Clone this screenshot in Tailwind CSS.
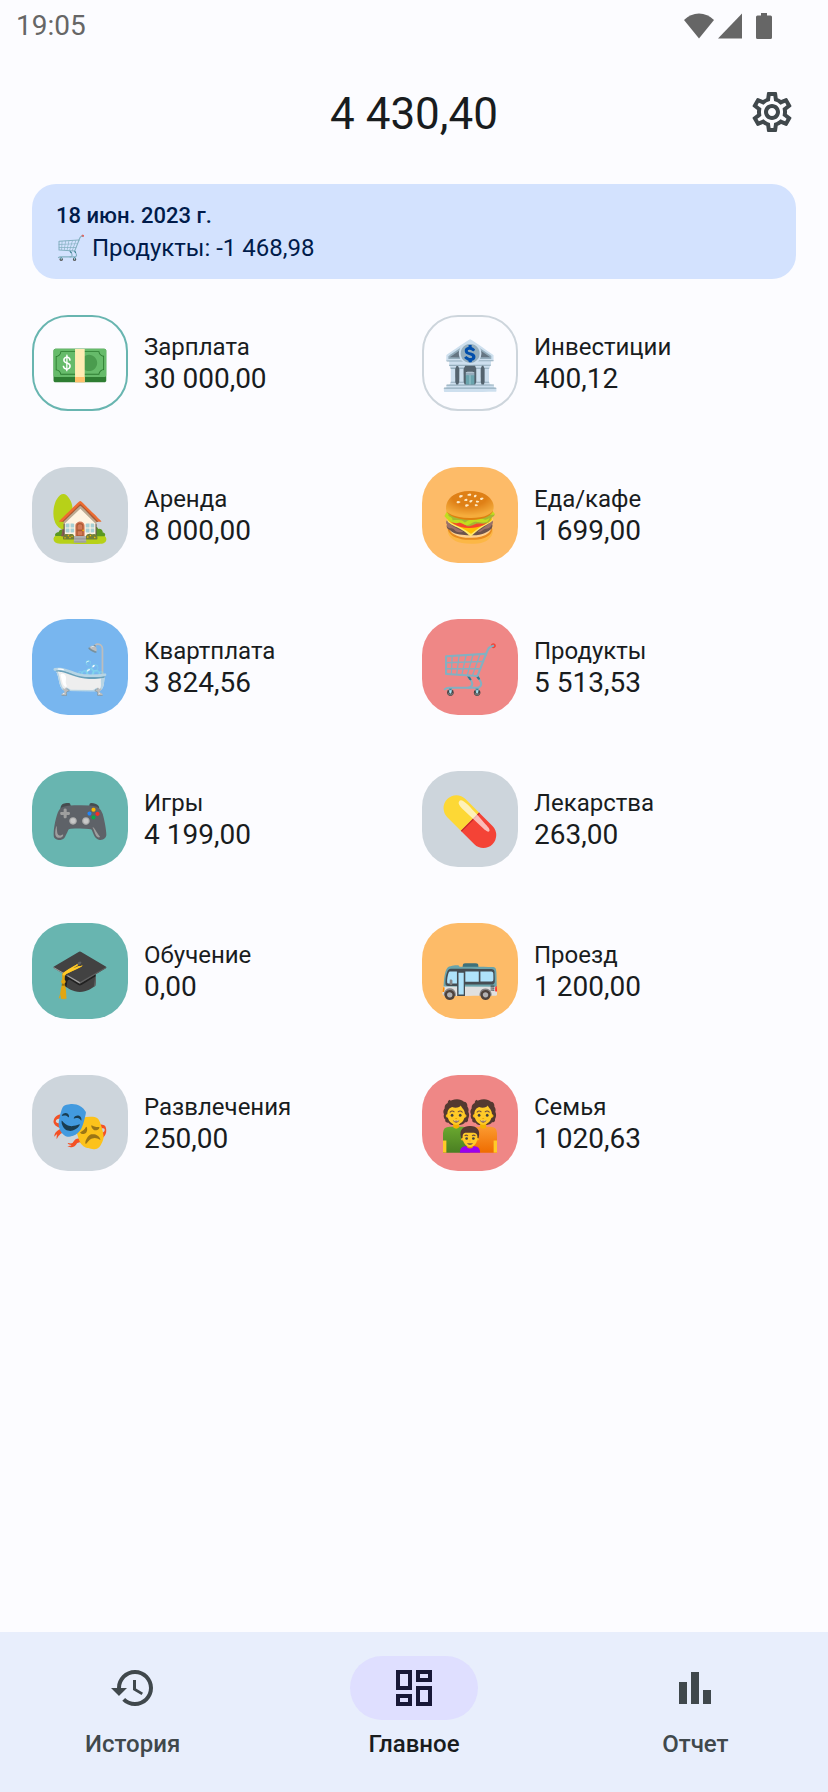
<!DOCTYPE html>
<html lang="ru">
<head>
<meta charset="utf-8">
<meta name="viewport" content="width=device-width, initial-scale=1">
<title>Бюджет</title>
<script src="https://cdn.jsdelivr.net/npm/@tailwindcss/browser@4"></script>
</head>
<body class="flex min-h-screen flex-col bg-[#fcfcff] font-[Roboto,sans-serif] text-[#191c1e]">

  <div class="flex h-12 items-center justify-between pt-1 pl-4 pr-14 text-[#666666]">
    <time class="text-[28px] leading-8">19:05</time>
    <div class="flex items-center">
      <svg class="h-[26px] w-[30px]" viewBox="0 0 30 26" fill="currentColor" aria-hidden="true"><path d="M0 7Q6.500 .5 15 .5T30 7L15 25.500z"/></svg>
      <svg class="ml-1 h-[26px] w-6" viewBox="0 0 24 26" fill="currentColor" aria-hidden="true"><path d="M24 .5v25H0z"/></svg>
      <svg class="ml-[14px] h-[26px] w-4" viewBox="0 0 16 26" fill="currentColor" aria-hidden="true"><path d="M5 0h6v2.500h3.500a1.500 1.500 0 0 1 1.500 1.500v20.500a1.500 1.500 0 0 1-1.500 1.500h-13A1.500 1.500 0 0 1 0 24.500V4a1.500 1.500 0 0 1 1.500-1.500H5z"/></svg>
    </div>
  </div>

  <header class="grid h-32 grid-cols-[48px_1fr_48px] items-center px-8">
    <h1 class="col-start-2 pt-1 text-center text-[44px] leading-[52px]">4 430,40</h1>
    <button type="button" aria-label="Настройки" class="text-[#40484c]">
      <svg class="size-12" viewBox="0 0 24 24" fill="currentColor" aria-hidden="true"><path d="M19.430 12.980c.040-.320.070-.640.070-.980s-.030-.660-.070-.980l2.110-1.650c.190-.150.240-.420.120-.640l-2-3.460c-.090-.160-.260-.250-.440-.250-.060 0-.120.010-.170.030l-2.490 1c-.520-.400-1.080-.730-1.690-.980l-.380-2.650C14.460 2.180 14.250 2 14 2h-4c-.250 0-.460.180-.490.420l-.380 2.650c-.610.250-1.170.590-1.690.980l-2.490-1c-.060-.020-.120-.030-.180-.030-.170 0-.340.090-.430.250l-2 3.460c-.130.220-.070.490.120.640l2.110 1.650c-.040.320-.070.650-.070.980s.030.660.070.980l-2.110 1.650c-.190.150-.240.420-.120.640l2 3.460c.090.160.260.250.440.250.060 0 .120-.010.170-.030l2.490-1c.520.400 1.080.730 1.690.980l.380 2.650c.030.240.240.420.490.420h4c.250 0 .460-.180.490-.420l.380-2.650c.610-.250 1.170-.590 1.690-.980l2.490 1c.060.020.120.030.180.030.170 0 .340-.090.430-.250l2-3.460c.120-.220.070-.490-.120-.640zm-1.980-1.710c.040.310.050.520.050.730s-.020.430-.050.730l-.140 1.130.890.700 1.080.840-.700 1.210-1.270-.510-1.040-.420-.900.680c-.430.320-.840.560-1.250.730l-1.060.430-.160 1.130-.200 1.350h-1.400l-.190-1.350-.160-1.130-1.060-.430c-.430-.180-.830-.410-1.230-.710l-.910-.700-1.060.430-1.270.510-.700-1.210 1.080-.840.890-.700-.140-1.130C6.520 12.430 6.500 12.200 6.500 12s.020-.430.050-.730l.140-1.130-.890-.700-1.080-.840.700-1.210 1.270.510 1.040.420.900-.680c.430-.320.840-.560 1.250-.730l1.060-.430.160-1.130.200-1.350h1.390l.190 1.350.160 1.130 1.060.430c.430.180.830.410 1.230.710l.910.700 1.060-.430 1.270-.510.700 1.210-1.070.850-.890.700zM12 8c-2.210 0-4 1.790-4 4s1.790 4 4 4 4-1.790 4-4-1.790-4-4-4m0 6c-1.100 0-2-.900-2-2s.900-2 2-2 2 .900 2 2-.900 2-2 2"/></svg>
    </button>
  </header>

  <main class="flex-1 px-8 pt-2">
    <section class="rounded-3xl bg-[#d3e2fe] px-6 pt-4 pb-[15px] text-[#001b4a]">
      <h2 class="text-[22px] leading-8 font-medium">18 июн. 2023 г.</h2>
      <p class="text-[24px] leading-8">🛒 Продукты: -1 468,98</p>
    </section>

    <ul class="mt-9 grid grid-cols-2 gap-x-4 gap-y-14">
      <li><button type="button" class="flex w-full items-center gap-4 text-left">
        <span class="flex size-24 items-center justify-center rounded-[36px] border-2 border-[#68b5b0] pt-1.5 text-[48px] leading-none">💵</span>
        <span class="flex flex-col"><span class="text-[24px] leading-8">Зарплата</span><span class="text-[28px] leading-8">30 000,00</span></span>
      </button></li>
      <li><button type="button" class="flex w-full items-center gap-4 text-left">
        <span class="flex size-24 items-center justify-center rounded-[36px] border-2 border-[#cdd5dc] pt-1.5 text-[48px] leading-none">🏦</span>
        <span class="flex flex-col"><span class="text-[24px] leading-8">Инвестиции</span><span class="text-[28px] leading-8">400,12</span></span>
      </button></li>
      <li><button type="button" class="flex w-full items-center gap-4 text-left">
        <span class="flex size-24 items-center justify-center rounded-[36px] bg-[#cdd5dc] pt-1.5 text-[48px] leading-none">🏡</span>
        <span class="flex flex-col"><span class="text-[24px] leading-8">Аренда</span><span class="text-[28px] leading-8">8 000,00</span></span>
      </button></li>
      <li><button type="button" class="flex w-full items-center gap-4 text-left">
        <span class="flex size-24 items-center justify-center rounded-[36px] bg-[#fdbb68] pt-1.5 text-[48px] leading-none">🍔</span>
        <span class="flex flex-col"><span class="text-[24px] leading-8">Еда/кафе</span><span class="text-[28px] leading-8">1 699,00</span></span>
      </button></li>
      <li><button type="button" class="flex w-full items-center gap-4 text-left">
        <span class="flex size-24 items-center justify-center rounded-[36px] bg-[#78b6ef] pt-1.5 text-[48px] leading-none">🛁</span>
        <span class="flex flex-col"><span class="text-[24px] leading-8">Квартплата</span><span class="text-[28px] leading-8">3 824,56</span></span>
      </button></li>
      <li><button type="button" class="flex w-full items-center gap-4 text-left">
        <span class="flex size-24 items-center justify-center rounded-[36px] bg-[#ef8786] pt-1.5 text-[48px] leading-none">🛒</span>
        <span class="flex flex-col"><span class="text-[24px] leading-8">Продукты</span><span class="text-[28px] leading-8">5 513,53</span></span>
      </button></li>
      <li><button type="button" class="flex w-full items-center gap-4 text-left">
        <span class="flex size-24 items-center justify-center rounded-[36px] bg-[#68b5b0] pt-1.5 text-[48px] leading-none">🎮</span>
        <span class="flex flex-col"><span class="text-[24px] leading-8">Игры</span><span class="text-[28px] leading-8">4 199,00</span></span>
      </button></li>
      <li><button type="button" class="flex w-full items-center gap-4 text-left">
        <span class="flex size-24 items-center justify-center rounded-[36px] bg-[#cdd5dc] pt-1.5 text-[48px] leading-none">💊</span>
        <span class="flex flex-col"><span class="text-[24px] leading-8">Лекарства</span><span class="text-[28px] leading-8">263,00</span></span>
      </button></li>
      <li><button type="button" class="flex w-full items-center gap-4 text-left">
        <span class="flex size-24 items-center justify-center rounded-[36px] bg-[#68b5b0] pt-1.5 text-[48px] leading-none">🎓</span>
        <span class="flex flex-col"><span class="text-[24px] leading-8">Обучение</span><span class="text-[28px] leading-8">0,00</span></span>
      </button></li>
      <li><button type="button" class="flex w-full items-center gap-4 text-left">
        <span class="flex size-24 items-center justify-center rounded-[36px] bg-[#fdbb68] pt-1.5 text-[48px] leading-none">🚌</span>
        <span class="flex flex-col"><span class="text-[24px] leading-8">Проезд</span><span class="text-[28px] leading-8">1 200,00</span></span>
      </button></li>
      <li><button type="button" class="flex w-full items-center gap-4 text-left">
        <span class="flex size-24 items-center justify-center rounded-[36px] bg-[#cdd5dc] pt-1.5 text-[48px] leading-none">🎭</span>
        <span class="flex flex-col"><span class="text-[24px] leading-8">Развлечения</span><span class="text-[28px] leading-8">250,00</span></span>
      </button></li>
      <li><button type="button" class="flex w-full items-center gap-4 text-left">
        <span class="flex size-24 items-center justify-center rounded-[36px] bg-[#ef8786] pt-1.5">
          <svg class="size-[54px]" viewBox="0 0 160 160" aria-hidden="true">
            <defs>
              <linearGradient id="green" x1="0" y1="0" x2="0" y2="1"><stop offset="0" stop-color="#6aa82f"/><stop offset="1" stop-color="#4a7f22"/></linearGradient>
              <linearGradient id="orange" x1="0" y1="0" x2="0" y2="1"><stop offset="0" stop-color="#fb9a30"/><stop offset="1" stop-color="#ef6c00"/></linearGradient>
              <g id="head">
                <path d="M3 45C-1 38 2 31 5 28 4 20 8 14 14 12 14 6 17 3 20 2 21 5 23 5 26 4 38-2 55 0 62 8 70 8 73 16 72 22 77 28 76 34 75 38 79 46 77 55 74 60 76 66 70 70 65 69 60 77 52 77 46 77H32C24 77 19 74 17 70 10 71 5 67 7 61 2 58 1 50 3 45Z" fill="#543930"/>
                <path d="M30 70h18v14q-9 8-18 0z" fill="#f3b100"/>
                <ellipse cx="39" cy="50" rx="31" ry="10" fill="#f7b817"/>
                <path d="M13 45C13 33 19 27 27 24 40 29 51 23 53 19 55 27 65 30 65 45 65 64 52 76 39 76S13 64 13 45Z" fill="#ffca28"/>
                <path d="M21 39q6-6 12-1M45 38q6-5 12 1" fill="none" stroke="#6d4c41" stroke-width="3" stroke-linecap="round"/>
                <ellipse cx="27" cy="48" rx="4" ry="4.500" fill="#404040"/><ellipse cx="51" cy="48" rx="4" ry="4.500" fill="#404040"/>
                <path d="M35 56h8l-4 3z" fill="#e59600"/>
                <path d="M29 63q10 3 20 0-3 7-10 7t-10-7z" fill="#795548"/><path d="M32 64q7 2 14 0l-1 2H33z" fill="#fff"/>
              </g>
            </defs>
            <path d="M0 159V101Q0 82 20 82H58Q80 82 80 104V159z" fill="url(#green)"/>
            <path d="M80 159V104Q80 82 102 82H140Q160 82 160 101V159z" fill="url(#orange)"/>
            <path d="M0 123h10v36H0z" fill="#ffca28"/><path d="M150 123h10v36h-10z" fill="#ffca28"/>
            <use href="#head"/>
            <use href="#head" x="80"/>
            <path d="M50 159q0-18 16-19h28q16 1 16 19z" fill="#9c00ef"/>
            <path d="M71 137h18v6q-9 7-18 0z" fill="#e59600"/>
            <path d="M53 113C47 90 62 80 78 80c20-2 34 11 28 33l-3 8H56z" fill="#543930"/>
            <ellipse cx="80" cy="119" rx="27" ry="7" fill="#f7b817"/>
            <path d="M58 112q0-10 8-12h26q10 2 10 12c0 20-10 30-22 30s-22-12-22-30z" fill="#ffca28"/>
            <path d="M64 109q5-4 10 0M86 109q5-4 10 0" fill="none" stroke="#6d4c41" stroke-width="3"/>
            <circle cx="70" cy="117" r="4" fill="#404040"/><circle cx="90" cy="117" r="4" fill="#404040"/>
            <path d="M77 124h6l-3 2z" fill="#e59600"/><path d="M71 130q9 2 18 0-3 6-9 6t-9-6z" fill="#795548"/>
          </svg>
        </span>
        <span class="flex flex-col"><span class="text-[24px] leading-8">Семья</span><span class="text-[28px] leading-8">1 020,63</span></span>
      </button></li>
    </ul>
  </main>

  <nav class="grid h-40 grid-cols-3 gap-x-4 bg-[#e8eefc] pt-6 text-[24px] leading-8 font-medium text-[#40484c]">
    <a href="#history" class="flex flex-col items-center gap-2">
      <span class="flex h-16 w-32 items-center justify-center">
        <svg class="size-12" viewBox="0 0 24 24" fill="currentColor" aria-hidden="true"><path d="M13 3c-4.970 0-9 4.030-9 9H1l3.890 3.890.070.140L9 12H6c0-3.870 3.130-7 7-7s7 3.130 7 7-3.130 7-7 7c-1.930 0-3.680-.790-4.940-2.060l-1.420 1.420C8.270 19.990 10.510 21 13 21c4.970 0 9-4.030 9-9s-4.030-9-9-9m-1 5v5l4.280 2.540.720-1.210-3.500-2.080V8z"/></svg>
      </span>
      История
    </a>
    <a href="#main" aria-current="page" class="flex flex-col items-center gap-2 text-[#191c1e]">
      <span class="flex h-16 w-32 items-center justify-center rounded-full bg-[#dfdfff] text-[#181837]">
        <svg class="size-12" viewBox="0 0 24 24" fill="currentColor" aria-hidden="true"><path d="M19 5v2h-4V5zM9 5v6H5V5zm10 8v6h-4v-6zM9 17v2H5v-2zM21 3h-8v6h8zM11 3H3v10h8zm10 8h-8v10h8zm-10 4H3v6h8z"/></svg>
      </span>
      Главное
    </a>
    <a href="#report" class="flex flex-col items-center gap-2">
      <span class="flex h-16 w-32 items-center justify-center">
        <svg class="size-12" viewBox="0 0 24 24" fill="currentColor" aria-hidden="true"><path d="M4 9h4v11H4zM10 4h4v16h-4zM16 13h4v7h-4z"/></svg>
      </span>
      Отчет
    </a>
  </nav>
</body>
</html>
